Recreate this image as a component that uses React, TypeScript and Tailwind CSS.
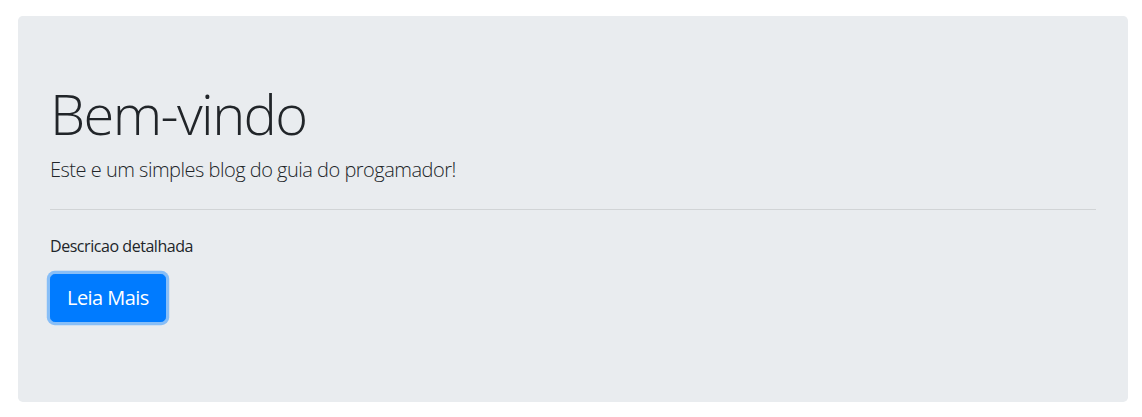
export default function App() {
  return (
    <div className="min-h-screen bg-white pt-4 text-[#212529] [font-family:'Open_Sans','Noto_Sans',sans-serif]">
      <div className="ml-[18px] w-[1110px] rounded-[4.8px] bg-[#e9ecef] px-8 pt-16 pb-16">
        <h1 className="mb-2 text-[56px] font-light leading-[1.2] tracking-[-1.6px]">Bem-vindo</h1>
        <p className="text-[20px] font-light leading-[1.5] tracking-[-0.5px]">
          Este e um simples blog do guia do progamador!
        </p>
        <hr className="my-6 border-t border-black/10" />
        <p className="mb-4 text-base leading-6 tracking-[-0.45px]">Descricao detalhada</p>
        <p className="mb-4 text-[20px] font-light leading-[1.5]">
          <a
            href="#"
            className="inline-block rounded-[4.8px] border border-[#007bff] bg-[#007bff] px-4 py-2 font-normal tracking-[-0.55px] text-white shadow-[0_0_0_3.2px_rgba(38,143,255,0.5)]"
          >
            Leia Mais
          </a>
        </p>
      </div>
    </div>
  )
}
